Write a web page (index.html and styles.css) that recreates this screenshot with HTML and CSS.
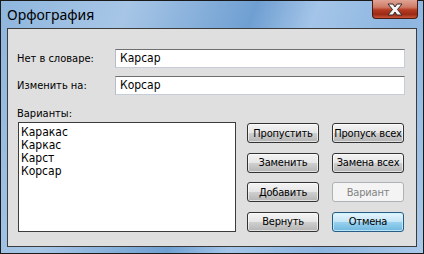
FILE: index.html
```html
<!DOCTYPE html>
<html>
<head>
<meta charset="utf-8">
<link rel="stylesheet" href="styles.css">
</head>
<body>
<div class="window">
  <div class="titlebar">
    <span class="title">Орфография</span>
    <div class="close">
      <svg width="22" height="13" viewBox="0 0 22 13">
        <path d="M4 1 L9 1 L11 4 L13 1 L18 1 L13.5 6.5 L18 12 L13 12 L11 9 L9 12 L4 12 L8.5 6.5 Z" fill="#f4f4f4" stroke="#3a2a28" stroke-width="1"/>
      </svg>
    </div>
  </div>
  <div class="client">
    <div class="row">
      <span class="label">Нет в словаре:</span>
      <div class="input">Карсар</div>
    </div>
    <div class="row">
      <span class="label">Изменить на:</span>
      <div class="input">Корсар</div>
    </div>
    <div class="label variants">Варианты:</div>
    <div class="bottom">
      <div class="list">
        <div>Каракас</div>
        <div>Каркас</div>
        <div>Карст</div>
        <div>Корсар</div>
      </div>
      <div class="buttons">
        <div class="btn">Пропустить</div>
        <div class="btn">Пропуск всех</div>
        <div class="btn">Заменить</div>
        <div class="btn">Замена всех</div>
        <div class="btn">Добавить</div>
        <div class="btn disabled">Вариант</div>
        <div class="btn">Вернуть</div>
        <div class="btn default">Отмена</div>
      </div>
    </div>
  </div>
</div>
</body>
</html>
```

FILE: styles.css
```css
html, body {
  margin: 0;
  padding: 0;
  background: #ffffff;
}
.window {
  width: 424px;
  height: 254px;
  box-sizing: border-box;
  border: 1px solid #1a1a1a;
  background: linear-gradient(110deg, #8fb6de 0%, #a7c6e6 25%, #6f9fd2 50%, #a4c5e8 62%, #8cb5e0 80%, #a9c9ea 100%);
  padding: 0 6px 6px 6px;
  display: flex;
  flex-direction: column;
}
.titlebar {
  height: 27px;
  position: relative;
  display: flex;
  align-items: center;
}
.title {
  font-family: "Noto Sans", sans-serif;
  font-size: 14px;
  color: #000;
  margin-top: -1px;
}
.close {
  position: absolute;
  right: -1px;
  top: -1px;
  width: 46px;
  height: 19px;
  box-sizing: border-box;
  border: 1px solid #4a1a12;
  border-top: none;
  border-radius: 0 0 4px 4px;
  background: linear-gradient(#e0a494 0%, #cf7a66 40%, #b43b22 55%, #9c2a14 80%, #c8553a 100%);
  display: flex;
  align-items: center;
  justify-content: center;
}
.client {
  flex: 1;
  border: 1px solid #3c3c3c;
  background: #dfdfdf;
  padding: 20px 11px 0 9px;
  display: flex;
  flex-direction: column;
  font-family: "DejaVu Sans Condensed", "DejaVu Sans", sans-serif;
  font-size: 11px;
  color: #000;
}
.row {
  display: flex;
  align-items: center;
  height: 19px;
  margin-bottom: 8px;
}
.label {
  width: 98px;
}
.input {
  flex: 1;
  height: 19px;
  box-sizing: border-box;
  background: #fff;
  border-top: 1px solid #6e6e6e;
  border-left: 1px solid #b8bcc4;
  border-right: 1px solid #c5cdd8;
  border-bottom: 1px solid #c5cdd8;
  padding-left: 4px;
  font-size: 12px;
  line-height: 17px;
}
.variants {
  margin-top: 4px;
  height: 14px;
  line-height: 14px;
}
.bottom {
  display: flex;
  margin-top: 1px;
}
.list {
  width: 218px;
  height: 110px;
  box-sizing: border-box;
  border: 1px solid #3c3c3c;
  background: #fff;
  margin-left: 1px;
  padding: 3px 0 0 2px;
  font-size: 12px;
  line-height: 13px;
}
.buttons {
  margin-left: 11px;
  margin-top: 1px;
  display: grid;
  grid-template-columns: 72px 72px;
  grid-auto-rows: 20px;
  column-gap: 13px;
  row-gap: 9.5px;
}
.btn {
  box-sizing: border-box;
  border: 1px solid #333;
  border-radius: 3px;
  background: linear-gradient(#f4f4f4 0%, #e6e6e6 48%, #cfcfcf 52%, #b4b4b4 100%);
  box-shadow: inset 0 0 0 1px rgba(255,255,255,0.6);
  display: flex;
  align-items: center;
  justify-content: center;
  font-size: 11px;
  letter-spacing: -0.2px;
  white-space: nowrap;
  color: #000;
}
.btn.disabled {
  border-color: #adb2b5;
  background: #f4f4f4;
  box-shadow: none;
  color: #838383;
}
.btn.default {
  border-color: #2a5d86;
  background: linear-gradient(#e5f4fc 0%, #c4e5f6 48%, #98d1ef 52%, #6fb7de 100%);
  box-shadow: inset 0 0 0 1px rgba(200,240,255,0.8);
}
```
